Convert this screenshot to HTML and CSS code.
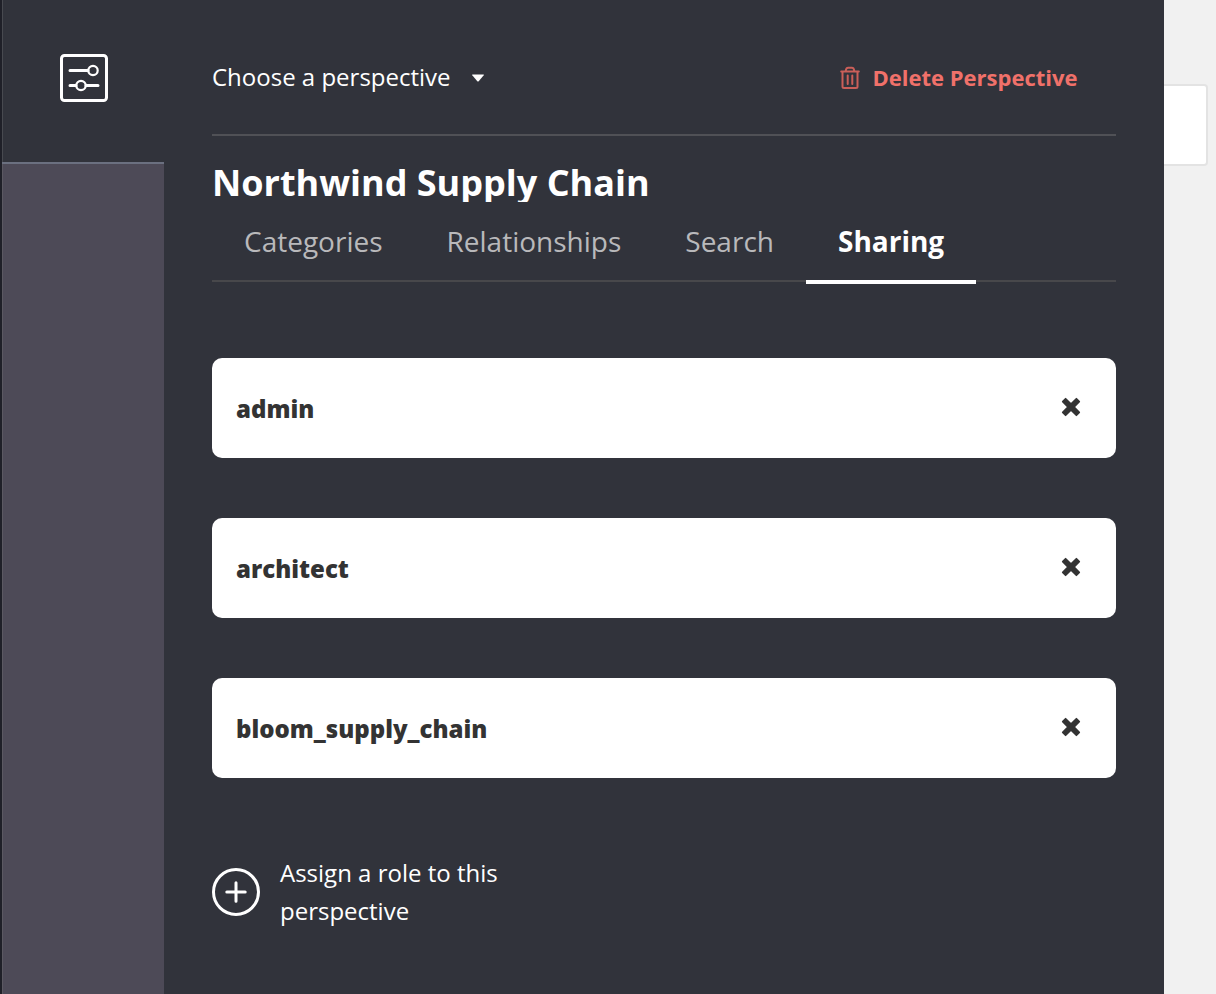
FILE: index.html
```html
<!DOCTYPE html>
<html lang="en">
<head>
<meta charset="utf-8">
<title>Perspective settings</title>
<link rel="stylesheet" href="styles.css">
</head>
<body>
<div class="app">
  <aside class="rail">
    <button class="rail-button" aria-label="Perspective settings">
      <svg width="48" height="48" viewBox="0 0 48 48" fill="none" stroke="#fff" stroke-width="3" stroke-linecap="round">
        <rect x="1.5" y="1.5" width="45" height="45" rx="3"/>
        <path d="M10 16.5H28M10 31.500H16M26 31.500H38"/>
        <circle cx="33" cy="16.500" r="4.700" stroke-width="2.200"/>
        <circle cx="21" cy="31.500" r="4.700" stroke-width="2.200"/>
      </svg>
    </button>
  </aside>
  <main class="drawer">
    <header class="toolbar">
      <button class="chooser">Choose a perspective
        <svg width="12" height="8" viewBox="0 0 12 8"><path d="M.5.500H11.500Q12.200.700 11.700 1.300L6.700 7.200Q6 7.900 5.300 7.200L.3 1.300Q-.2.700.5.500Z" fill="#fff"/></svg>
      </button>
      <button class="delete">
        <svg width="20" height="24" viewBox="0 0 20 24" fill="none" stroke="#c95f59" stroke-width="2" stroke-linecap="round" stroke-linejoin="round">
          <path d="M1.200 5.500H18.800M2.500 5.500V20.500Q2.500 22 4 22H16Q17.500 22 17.500 20.500V5.500M5.700 5.200Q6 1.800 8.200 1.800H11.800Q14 1.800 14.300 5.200M7.700 9.500V18M12.300 9.500V18"/>
        </svg>
        <span>Delete Perspective</span>
      </button>
    </header>
    <h1 class="title">Northwind Supply Chain</h1>
    <nav class="tabs">
      <a class="tab">Categories</a>
      <a class="tab">Relationships</a>
      <a class="tab">Search</a>
      <a class="tab tab-active">Sharing</a>
    </nav>
    <ul class="roles">
      <li class="role"><span>admin</span><svg class="remove" width="20" height="20" viewBox="0 0 20 20"><path d="M4.600 1.800 10 7.200 15.400 1.800 18.200 4.600 12.800 10 18.200 15.400 15.400 18.200 10 12.800 4.600 18.200 1.800 15.400 7.200 10 1.800 4.600Z"/></svg></li>
      <li class="role"><span>architect</span><svg class="remove" width="20" height="20" viewBox="0 0 20 20"><path d="M4.600 1.800 10 7.200 15.400 1.800 18.200 4.600 12.800 10 18.200 15.400 15.400 18.200 10 12.800 4.600 18.200 1.800 15.400 7.200 10 1.800 4.600Z"/></svg></li>
      <li class="role"><span>bloom_supply_chain</span><svg class="remove" width="20" height="20" viewBox="0 0 20 20"><path d="M4.600 1.800 10 7.200 15.400 1.800 18.200 4.600 12.800 10 18.200 15.400 15.400 18.200 10 12.800 4.600 18.200 1.800 15.400 7.200 10 1.800 4.600Z"/></svg></li>
    </ul>
    <button class="assign">
      <svg width="48" height="48" viewBox="0 0 48 48" fill="none" stroke="#fff" stroke-width="3" stroke-linecap="round"><circle cx="24" cy="24" r="22.500"/><path d="M14.800 24H33.200M24 14.800V33.200"/></svg>
      <span>Assign a role to this perspective</span>
    </button>
  </main>
  <div class="canvas"><div class="search-box"></div></div>
</div>
</body>
</html>
```

FILE: styles.css
```css
* { box-sizing: border-box; }
body { margin: 0; font-family: "Open Sans", sans-serif; background: #f1f1f1; color: #fff; }
button { margin: 0; padding: 0; border: 0; background: none; color: inherit; font: inherit; text-align: left; }
svg { display: block; flex: none; }
.app { display: flex; height: 994px; overflow: hidden; background: #f1f1f1; }
.rail { width: 164px; flex: none; border-left: 2px solid #1f2028; background: #4d4a57; box-shadow: inset 1px 0 #5b5962; }
.rail-button { display: flex; width: 100%; height: 164px; padding: 54px 0 0 58px; align-items: flex-start; background: #31333b; border-bottom: 2px solid #6b7080; box-shadow: inset 1px 0 #484a50; }
.drawer { width: 1000px; flex: none; padding: 0 48px; background: #31333b; }
.toolbar { display: flex; justify-content: space-between; height: 136px; padding: 0 38.5px 0 0; border-bottom: 2px solid #505156; }
.chooser { display: flex; align-items: center; gap: 21px; height: 40px; margin-top: 56px; font-size: 24px; }
.chooser svg { margin-top: 3px; }
.delete { display: flex; align-items: center; gap: 12.5px; height: 40px; margin-top: 57px; font-size: 22px; font-weight: 700; color: #f0716a; }
.delete svg { margin-top: 2px; }
.title { height: 44px; margin: 22px 0 0; overflow: hidden; font-size: 36px; line-height: 50px; font-weight: 700; white-space: nowrap; }
.tabs { display: flex; height: 80px; border-bottom: 2px solid #48484b; }
.tab { height: 82px; padding: 19px 32px 0; font-size: 28px; line-height: 40px; color: #b9b9bb; }
.tab-active { border-bottom: 4px solid #fff; color: #fff; font-weight: 700; }
.roles { display: grid; gap: 60px; margin: 76px 0 0; padding: 0; list-style: none; }
.role { display: flex; align-items: center; justify-content: space-between; height: 100px; padding: 0 35px 0 24px; border-radius: 10px; background: #fff; color: #333; font-size: 24px; font-weight: 800; }
.remove { margin-top: -2px; fill: #333; stroke: #333; stroke-width: 1.800; stroke-linejoin: round; }
.assign { display: flex; align-items: center; gap: 20px; margin-top: 76px; font-size: 24px; line-height: 38px; }
.assign span { width: 240px; }
.canvas { flex: 1; padding-top: 84px; }
.search-box { width: 44px; height: 82px; border: 2px solid #e3e3e3; border-left: 0; border-radius: 0 4px 4px 0; background: #fff; }
```
